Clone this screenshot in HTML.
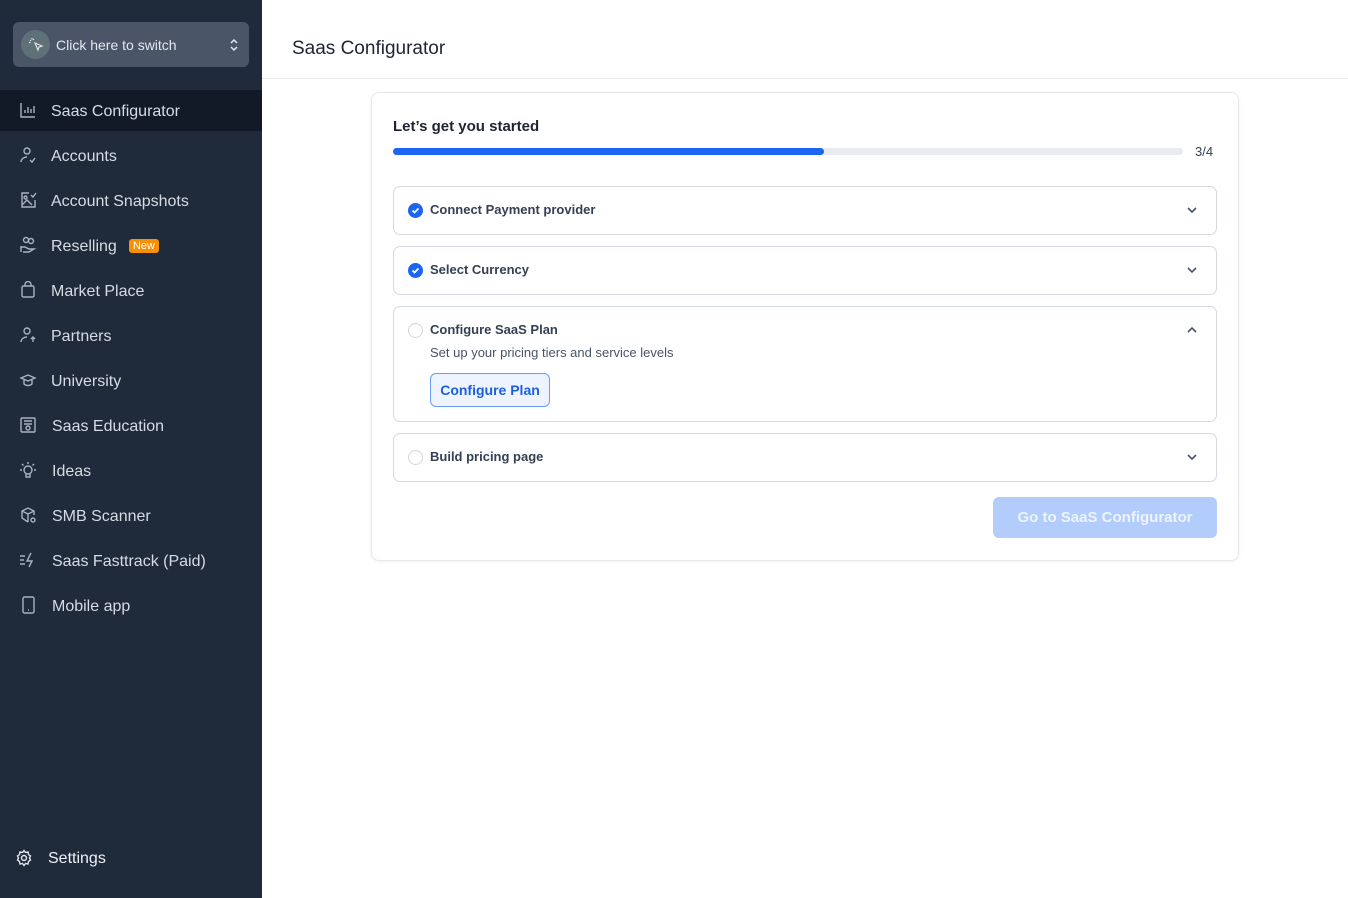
<!DOCTYPE html>
<html><head><style>
*{box-sizing:border-box;margin:0;padding:0}
body{width:1348px;height:898px;font-family:"Liberation Sans",sans-serif;background:#fff;position:relative;overflow:hidden}
.sb{position:absolute;left:0;top:0;width:262px;height:898px;background:#1f2a3a}
.sw{position:absolute;left:13px;top:22px;width:236px;height:45px;background:#4a5567;border-radius:6px}
.sw .av{position:absolute;left:8px;top:8px;width:29px;height:29px;border-radius:50%;background:#5f7177}
.sw span{position:absolute;left:43px;top:15px;color:#e5e8ee;font-size:14px}
.item{position:absolute;left:0;width:262px;height:41px;color:#d7dce4;font-size:16px}
.item svg{position:absolute;left:19px;top:11px}
.item span{position:absolute;left:51px;top:13px}
.act{background:#121a28}
.new{display:inline-block;background:#f79009;color:#fff;font-size:11px;padding:1px 4px;border-radius:3px;margin-left:12px;vertical-align:2px}
.hd{position:absolute;left:262px;top:0;right:0;height:79px;border-bottom:1px solid #e8eaee}
.hd span{position:absolute;left:30px;top:38px;font-size:19px;color:#1d2433}
.card{position:absolute;left:371px;top:92px;width:868px;height:469px;border:1px solid #e6e8ec;border-radius:8px;box-shadow:0 1px 3px rgba(0,0,0,.06)}
.ttl{position:absolute;left:21px;top:25px;font-size:15px;font-weight:bold;color:#1d2433}
.bar{position:absolute;left:21px;top:55px;width:790px;height:7px;border-radius:4px;background:#e9ebef}
.bar i{display:block;width:431px;height:7px;border-radius:4px;background:#1c64f2}
.frac{position:absolute;left:823px;top:51px;font-size:13px;color:#344054}
.acc{position:absolute;left:21px;width:824px;border:1px solid #d5d9e0;border-radius:7px}
.acc b{position:absolute;left:36px;top:15px;font-size:13px;color:#344054}
.ck{position:absolute;left:14px;top:16px;width:15px;height:15px;border-radius:50%}
.ck.on{background:#1c64f2}
.ck.off{border:1px solid #d0d5dd}
.chev{position:absolute;right:18px;top:17px}
.btn{position:absolute;left:621px;top:404px;width:224px;height:41px;background:#b2cdfc;border-radius:6px;color:#eef4ff;font-size:15px;font-weight:bold;text-align:center;line-height:41px}
</style></head><body>
<div class="sb">
 <div class="sw"><div class="av"><svg width="29" height="29" viewBox="0 0 29 29" fill="none" stroke="#dfe5e8" stroke-width="1.2"><path d="M14 13l7 3-3 1-1 3z"/><path d="M9 10l1 1M11 8v1.5M8 12.5h1.5M13 9l-1 1"/></svg></div><span>Click here to switch</span>
 <svg style="position:absolute;right:10px;top:16px" width="10" height="14" viewBox="0 0 10 14" fill="none" stroke="#e5e8ee" stroke-width="1.5"><path d="M2 5l3-3 3 3M2 9l3 3 3-3"/></svg></div>
 <div class="item act" style="top:90px"><svg width="18" height="18" viewBox="0 0 18 18" fill="none" stroke="#aab2bf" stroke-width="1.4"><path d="M2 2v14h14M6 12V9M9 12V6M12 12V8M15 12V5"/></svg><span>Saas Configurator</span></div>
 <div class="item" style="top:135px"><svg width="18" height="18" viewBox="0 0 18 18" fill="none" stroke="#aab2bf" stroke-width="1.4"><circle cx="8" cy="5" r="3"/><path d="M2 16c0-3 3-5 6-5M11 14l2 2 3-4"/></svg><span>Accounts</span></div>
 <div class="item" style="top:180px"><svg width="18" height="18" viewBox="0 0 18 18" fill="none" stroke="#aab2bf" stroke-width="1.4"><path d="M10 2H3v14h13V9"/><circle cx="6.5" cy="6.5" r="1.5"/><path d="M3 14l5-5 5 5M12 4l2 2 3-4"/></svg><span>Account Snapshots</span></div>
 <div class="item" style="top:225px"><svg width="18" height="18" viewBox="0 0 18 18" fill="none" stroke="#aab2bf" stroke-width="1.4"><circle cx="7" cy="4" r="2.5"/><circle cx="12" cy="5" r="2.5"/><path d="M2 10v6M2 11h4l4 2h5l-5 3H4"/></svg><span>Reselling<i class="new" style="font-style:normal">New</i></span></div>
 <div class="item" style="top:270px"><svg width="18" height="18" viewBox="0 0 18 18" fill="none" stroke="#aab2bf" stroke-width="1.4"><rect x="3" y="5" width="12" height="11" rx="1.5"/><path d="M6 5V3.5a3 3 0 016 0V5"/></svg><span>Market Place</span></div>
 <div class="item" style="top:315px"><svg width="18" height="18" viewBox="0 0 18 18" fill="none" stroke="#aab2bf" stroke-width="1.4"><circle cx="8" cy="5" r="3"/><path d="M2 16c0-3 3-5 6-5M14 16v-5M12 13l2-2 2 2"/></svg><span>Partners</span></div>
 <div class="item" style="top:360px"><svg width="18" height="18" viewBox="0 0 18 18" fill="none" stroke="#aab2bf" stroke-width="1.4"><path d="M9 4l7 3-7 3-7-3z"/><path d="M5 9v4c2 2 6 2 8 0V9"/></svg><span>University</span></div>
 <div class="item" style="top:405px"><svg width="18" height="18" viewBox="0 0 18 18" fill="none" stroke="#aab2bf" stroke-width="1.4"><rect x="2" y="2" width="14" height="14" rx="1"/><path d="M5 5h8M5 8h8"/><circle cx="9" cy="12" r="2"/></svg><span style="left:52px">Saas Education</span></div>
 <div class="item" style="top:450px"><svg width="18" height="18" viewBox="0 0 18 18" fill="none" stroke="#aab2bf" stroke-width="1.4"><circle cx="9" cy="9" r="4"/><path d="M7 13v3h4v-3M1 9h2M15 9h2M9 1v2M3 3l1.5 1.5M15 3l-1.5 1.5"/></svg><span style="left:52px">Ideas</span></div>
 <div class="item" style="top:495px"><svg width="18" height="18" viewBox="0 0 18 18" fill="none" stroke="#aab2bf" stroke-width="1.4"><path d="M9 2l6 3v4M9 2L3 5v7l6 4M3 5l6 3 6-3M9 8v8"/><circle cx="14" cy="14" r="2"/></svg><span style="left:52px">SMB Scanner</span></div>
 <div class="item" style="top:540px"><svg width="18" height="18" viewBox="0 0 18 18" fill="none" stroke="#aab2bf" stroke-width="1.4"><path d="M1 5h5M1 9h4M1 13h5M12 2l-4 8h5l-3 6"/></svg><span style="left:52px">Saas Fasttrack (Paid)</span></div>
 <div class="item" style="top:585px"><svg width="18" height="18" viewBox="0 0 18 18" fill="none" stroke="#aab2bf" stroke-width="1.4"><rect x="4" y="1" width="11" height="16" rx="1.5"/><path d="M9 14h1"/></svg><span style="left:52px">Mobile app</span></div>
 <div class="item" style="top:837px"><svg style="left:15px;top:12px" width="18" height="18" viewBox="0 0 18 18" fill="none" stroke="#e5e8ee" stroke-width="1.4"><circle cx="9" cy="9" r="2.5"/><path d="M9 1.5l1.5 2 2.5-.5.5 2.5 2 1.5-1 2 1 2-2 1.5-.5 2.5-2.5-.5L9 16.5l-1.5-2-2.5.5-.5-2.5-2-1.5 1-2-1-2 2-1.5.5-2.5 2.5.5z"/></svg><span style="left:48px;color:#eef1f5">Settings</span></div>
</div>
<div class="hd"><span>Saas Configurator</span></div>
<div class="card">
 <div class="ttl">Let’s get you started</div>
 <div class="bar"><i></i></div><div class="frac">3/4</div>
 <div class="acc" style="top:93px;height:49px"><div class="ck on"><svg width="15" height="15" viewBox="0 0 15 15" fill="none" stroke="#fff" stroke-width="1.8"><path d="M4.5 7.5l2 2 4-4"/></svg></div><b>Connect Payment provider</b><svg class="chev" width="12" height="12" viewBox="0 0 12 12" fill="none" stroke="#475467" stroke-width="1.6"><path d="M2 4l4 4 4-4"/></svg></div>
 <div class="acc" style="top:153px;height:49px"><div class="ck on"><svg width="15" height="15" viewBox="0 0 15 15" fill="none" stroke="#fff" stroke-width="1.8"><path d="M4.5 7.5l2 2 4-4"/></svg></div><b>Select Currency</b><svg class="chev" width="12" height="12" viewBox="0 0 12 12" fill="none" stroke="#475467" stroke-width="1.6"><path d="M2 4l4 4 4-4"/></svg></div>
 <div class="acc" style="top:213px;height:116px"><div class="ck off"></div><b>Configure SaaS Plan</b><svg class="chev" width="12" height="12" viewBox="0 0 12 12" fill="none" stroke="#475467" stroke-width="1.6"><path d="M2 8l4-4 4 4"/></svg>
  <div style="position:absolute;left:36px;top:38px;font-size:13px;color:#475467">Set up your pricing tiers and service levels</div>
  <div style="position:absolute;left:36px;top:66px;width:120px;height:34px;border:1px solid #6b9cf5;border-radius:6px;background:#eef4ff;color:#1c5fe0;font-size:14px;font-weight:bold;text-align:center;line-height:32px">Configure Plan</div></div>
 <div class="acc" style="top:340px;height:49px"><div class="ck off"></div><b>Build pricing page</b><svg class="chev" width="12" height="12" viewBox="0 0 12 12" fill="none" stroke="#475467" stroke-width="1.6"><path d="M2 4l4 4 4-4"/></svg></div>
 <div class="btn">Go to SaaS Configurator</div>
</div>
</body></html>
